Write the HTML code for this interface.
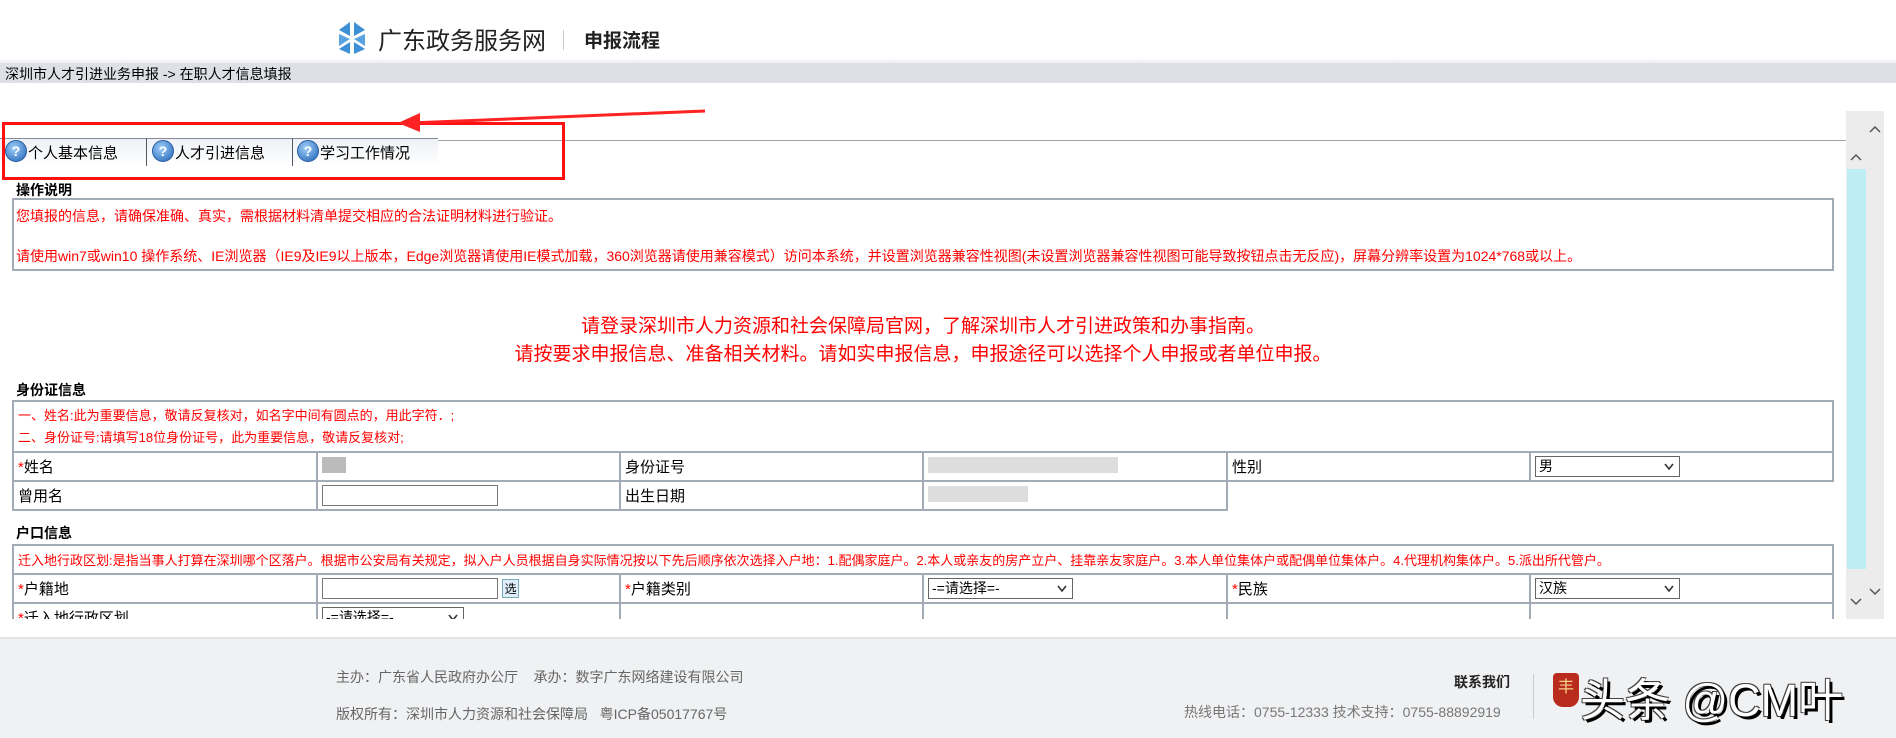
<!DOCTYPE html>
<html><head><meta charset="utf-8"><style>
*{margin:0;padding:0;box-sizing:border-box}
body{width:1896px;height:738px;overflow:hidden;background:#fff;font-family:"Liberation Sans","Noto Sans CJK SC",sans-serif;position:relative;color:#000}
.a{position:absolute;white-space:nowrap}
.red{color:#f00}
table{border-collapse:collapse;position:absolute;left:12px;width:1822px;font-size:15px}
td{border:2px solid #a4abb8;padding:0 0 0 4px;height:29px}
.sel{display:inline-block;border:1px solid #666;height:21px;font-size:14px;line-height:19px;padding-left:3px;position:relative;vertical-align:middle}
.sel svg{position:absolute;right:5px;top:6px}
.inp{display:inline-block;border:1px solid #777;width:176px;height:21px;vertical-align:middle}
.h{font-weight:bold;font-size:14px}
.q{position:absolute;top:140px;width:22px;height:22px;border-radius:50%;background:radial-gradient(circle at 40% 35%,#9fd0fa,#1c5fb5);border:1px solid #2a5ea0;color:#fff;font-size:14px;font-weight:bold;text-align:center;line-height:20px}
</style></head><body>
<svg class="a" style="left:337px;top:20px" width="30" height="36" viewBox="0 0 30 36">
<polygon points="2,10 13,2 13,16" fill="#3d8fd6"/><polygon points="17,2 28,10 17,16" fill="#3d8fd6"/>
<polygon points="2,14 13,19 2,26" fill="#5aa3e0"/><polygon points="28,14 28,26 17,19" fill="#5aa3e0"/>
<polygon points="2,29 13,22 13,34" fill="#3d8fd6"/><polygon points="17,22 28,29 17,34" fill="#3d8fd6"/>
</svg>
<div class="a" style="left:378px;top:21px;font-size:24px;color:#222">广东政务服务网</div>
<div class="a" style="left:563px;top:30px;width:1px;height:20px;background:#ccc"></div>
<div class="a" style="left:584px;top:26px;font-size:19px;font-weight:bold;color:#222">申报流程</div>
<div class="a" style="left:0;top:58px;width:1896px;height:5px;background:linear-gradient(#fff,#eceef1)"></div>
<div class="a" style="left:0;top:63px;width:1896px;height:20px;background:#dde1e6"></div>
<div class="a" style="left:5px;top:64px;font-size:14px">深圳市人才引进业务申报 -&gt; 在职人才信息填报</div>
<div class="a" style="left:1846px;top:111px;width:38px;height:508px;background:#ececec"></div>
<div class="a" style="left:1847px;top:169px;width:19px;height:400px;background:#bdeef5"></div>
<svg class="a" style="left:1869px;top:125px" width="12" height="8"><polyline points="1,7 6,2 11,7" fill="none" stroke="#555" stroke-width="1.5"/></svg>
<svg class="a" style="left:1850px;top:153px" width="12" height="8"><polyline points="1,7 6,2 11,7" fill="none" stroke="#555" stroke-width="1.5"/></svg>
<svg class="a" style="left:1869px;top:588px" width="12" height="8"><polyline points="1,1 6,6 11,1" fill="none" stroke="#555" stroke-width="1.5"/></svg>
<svg class="a" style="left:1850px;top:598px" width="12" height="8"><polyline points="1,1 6,6 11,1" fill="none" stroke="#555" stroke-width="1.5"/></svg>
<div class="a" style="left:0;top:140px;width:1846px;height:1px;background:#a0a5ad"></div>
<div class="a" style="left:0;top:138px;width:438px;height:28px;background:#fff"></div>
<div class="a" style="left:0;top:138px;width:147px;height:28px;background:linear-gradient(#eef1f5,#fff);border-right:1px solid #556;border-top:1px solid #889"></div>
<div class="a" style="left:147px;top:138px;width:146px;height:28px;background:linear-gradient(#eef1f5,#fff);border-right:1px solid #556;border-top:1px solid #889"></div>
<div class="a" style="left:293px;top:138px;width:145px;height:28px;background:linear-gradient(#eef1f5,#fff);border-top:1px solid #889"></div>
<div class="q" style="left:5px">?</div>
<div class="q" style="left:152px">?</div>
<div class="q" style="left:297px">?</div>
<div class="a" style="left:28px;top:142px;font-size:15px">个人基本信息</div>
<div class="a" style="left:175px;top:142px;font-size:15px">人才引进信息</div>
<div class="a" style="left:320px;top:142px;font-size:15px">学习工作情况</div>
<div class="a" style="left:2px;top:122px;width:563px;height:58px;border:3px solid #f11"></div>
<svg class="a" style="left:390px;top:100px" width="330" height="35"><line x1="315" y1="11" x2="20" y2="23" stroke="#f22" stroke-width="3"/><polygon points="8,23 30,13 30,32" fill="#f22"/></svg>
<div class="a h" style="left:16px;top:180px">操作说明</div>
<div class="a" style="left:12px;top:198px;width:1822px;height:73px;border:2px solid #a4abb8"></div>
<div class="a red" style="left:16px;top:206px;font-size:14px">您填报的信息，请确保准确、真实，需根据材料清单提交相应的合法证明材料进行验证。</div>
<div class="a red" style="left:16px;top:246px;font-size:14px">请使用win7或win10 操作系统、IE浏览器（IE9及IE9以上版本，Edge浏览器请使用IE模式加载，360浏览器请使用兼容模式）访问本系统，并设置浏览器兼容性视图(未设置浏览器兼容性视图可能导致按钮点击无反应)，屏幕分辨率设置为1024*768或以上。</div>
<div class="a red" style="left:0;width:1846px;text-align:center;top:313px;font-size:19px;line-height:28px">请登录深圳市人力资源和社会保障局官网，了解深圳市人才引进政策和办事指南。<br>请按要求申报信息、准备相关材料。请如实申报信息，申报途径可以选择个人申报或者单位申报。</div>
<div class="a h" style="left:16px;top:380px">身份证信息</div>
<table style="top:400px">
<tr><td colspan="6" class="red" style="height:51px;font-size:13px;line-height:22px">一、姓名:此为重要信息，敬请反复核对，如名字中间有圆点的，用此字符．;<br>二、身份证号:请填写18位身份证号，此为重要信息，敬请反复核对;</td></tr>
<tr><td style="width:304px"><span class="red">*</span>姓名</td><td style="width:303px"><span style="display:inline-block;width:24px;height:16px;background:#bbb"></span></td><td style="width:303px">身份证号</td><td style="width:304px"><span style="display:inline-block;width:190px;height:16px;background:#ddd"></span></td><td style="width:303px">性别</td><td><span class="sel" style="width:145px">男<svg width="10" height="8"><polyline points="1,1 5,6 9,1" fill="none" stroke="#333" stroke-width="1.6"/></svg></span></td></tr>
<tr><td>曾用名</td><td><span class="inp"></span></td><td>出生日期</td><td><span style="display:inline-block;width:100px;height:16px;background:#ddd"></span></td><td colspan="2" style="border:none;border-left:2px solid #a4abb8"></td></tr>
</table>
<div class="a h" style="left:16px;top:523px">户口信息</div>
<div class="a" style="left:0;top:544px;width:1846px;height:75px;overflow:hidden">
<table style="top:0">
<tr><td colspan="6" class="red" style="font-size:13px;height:29px">迁入地行政区划:是指当事人打算在深圳哪个区落户。根据市公安局有关规定，拟入户人员根据自身实际情况按以下先后顺序依次选择入户地：1.配偶家庭户。2.本人或亲友的房产立户、挂靠亲友家庭户。3.本人单位集体户或配偶单位集体户。4.代理机构集体户。5.派出所代管户。</td></tr>
<tr><td style="width:304px"><span class="red">*</span>户籍地</td><td style="width:303px"><span class="inp"></span> <span style="display:inline-block;width:17px;height:19px;border:1px solid #7ab;background:#dfeefa;font-size:12px;vertical-align:middle;text-align:center">选</span></td><td style="width:303px"><span class="red">*</span>户籍类别</td><td style="width:304px"><span class="sel" style="width:145px">-=请选择=-<svg width="10" height="8"><polyline points="1,1 5,6 9,1" fill="none" stroke="#333" stroke-width="1.6"/></svg></span></td><td style="width:303px"><span class="red">*</span>民族</td><td><span class="sel" style="width:145px">汉族<svg width="10" height="8"><polyline points="1,1 5,6 9,1" fill="none" stroke="#333" stroke-width="1.6"/></svg></span></td></tr>
<tr><td><span class="red">*</span>迁入地行政区划</td><td><span class="sel" style="width:142px">-=请选择=-<svg width="10" height="8"><polyline points="1,1 5,6 9,1" fill="none" stroke="#333" stroke-width="1.6"/></svg></span></td><td></td><td></td><td></td><td></td></tr>
</table></div>
<div class="a" style="left:0;top:637px;width:1896px;height:101px;background:#f0f1f3;border-top:2px solid #e2e4e8"></div>
<div class="a" style="left:336px;top:667px;font-size:14px;color:#666">主办：广东省人民政府办公厅 &nbsp;&nbsp;&nbsp;承办：数字广东网络建设有限公司</div>
<div class="a" style="left:336px;top:704px;font-size:14px;color:#666">版权所有：深圳市人力资源和社会保障局 &nbsp;&nbsp;粤ICP备05017767号</div>
<div class="a" style="left:1454px;top:672px;font-size:14px;font-weight:bold;color:#222">联系我们</div>
<div class="a" style="left:1184px;top:702px;font-size:14px;color:#777">热线电话：0755-12333 技术支持：0755-88892919</div>
<div class="a" style="left:1533px;top:674px;width:1px;height:45px;background:#ccc"></div>
<div class="a" style="left:1553px;top:673px;width:26px;height:34px;background:#b92b1c;border-radius:4px 4px 10px 10px;color:#f5d08a;font-size:16px;text-align:center">丰</div>
<div class="a" style="left:1580px;top:664px;font-size:45px;color:#fff;text-shadow:3px 3px 0 #000,-1px -1px 0 #444,1px -1px 0 #444,-1px 1px 0 #444">头条 @CM叶</div>
</body></html>
